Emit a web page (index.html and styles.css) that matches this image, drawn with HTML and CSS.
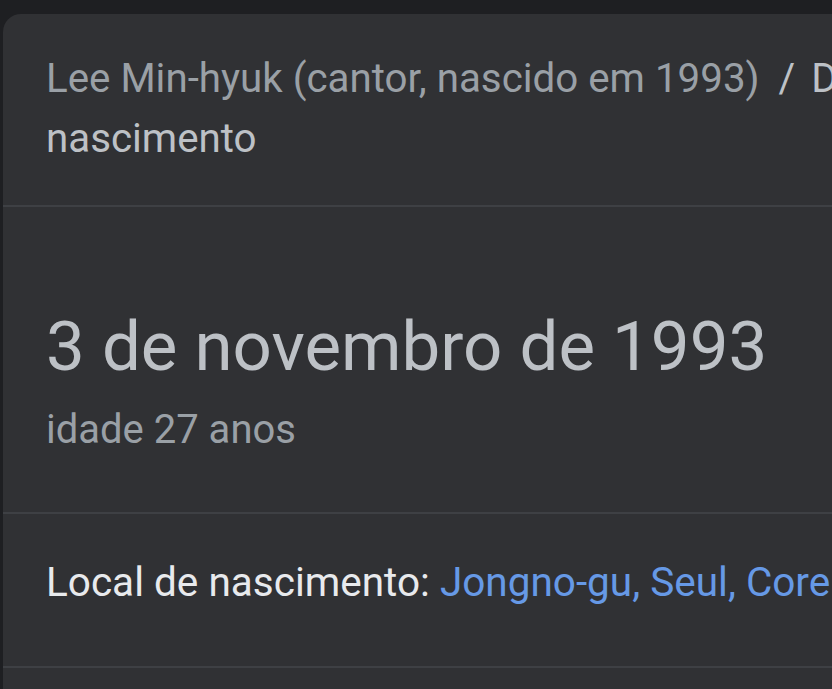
FILE: index.html
```html
<!DOCTYPE html>
<html lang="pt">
<head>
<meta charset="utf-8">
<title>Data de nascimento</title>
<link rel="stylesheet" href="styles.css">
</head>
<body>
<div class="card">
  <div class="section crumb">
    <span class="crumb-parent">Lee Min-hyuk (cantor, nascido em 1993)</span><span class="crumb-sep">/</span><span class="crumb-current">Data de nascimento</span>
  </div>
  <div class="section answer">
    <div class="date">3 de novembro de 1993</div>
    <div class="age">idade 27 anos</div>
  </div>
  <div class="section place">
    <span class="label">Local de nascimento: </span><a class="link" href="#">Jongno-gu, Seul, Coreia do Sul</a>
  </div>
  <div class="section rest"></div>
</div>
</body>
</html>
```
FILE: styles.css
```css
html, body {
  margin: 0;
  padding: 0;
  background: #1e1f22;
  overflow: hidden;
  height: 100%;
}
body {
  font-family: Roboto, "Noto Sans", Arial, sans-serif;
  padding: 14px 0 0 3px;
  box-sizing: border-box;
}
.card {
  width: 1000px;
  min-height: 800px;
  background: #303134;
  border-radius: 18px 0 0 0;
}
.section {
  padding-left: 43px;
  border-bottom: 2px solid #3e4044;
}
.crumb {
  font-size: 40.3px;
  line-height: 60px;
  padding-top: 35px;
  padding-bottom: 36px;
  color: #bdc1c6;
}
.crumb-parent {
  color: #9aa0a6;
}
.crumb-sep {
  display: inline-block;
  margin: 0 16px 0 19px;
  color: #bdc1c6;
}
.answer {
  padding-top: 98px;
  padding-bottom: 54px;
}
.date {
  font-size: 69px;
  line-height: 84px;
  color: #bdc1c6;
}
.age {
  margin-top: 13px;
  font-size: 40px;
  line-height: 56px;
  color: #9aa0a6;
}
.place {
  font-size: 40.5px;
  line-height: 60px;
  padding-top: 38px;
  padding-bottom: 54px;
  white-space: nowrap;
}
.label {
  color: #e8eaed;
}
.link {
  color: #6699e6;
  text-decoration: none;
}
.rest {
  border-bottom: none;
  height: 40px;
}
```
